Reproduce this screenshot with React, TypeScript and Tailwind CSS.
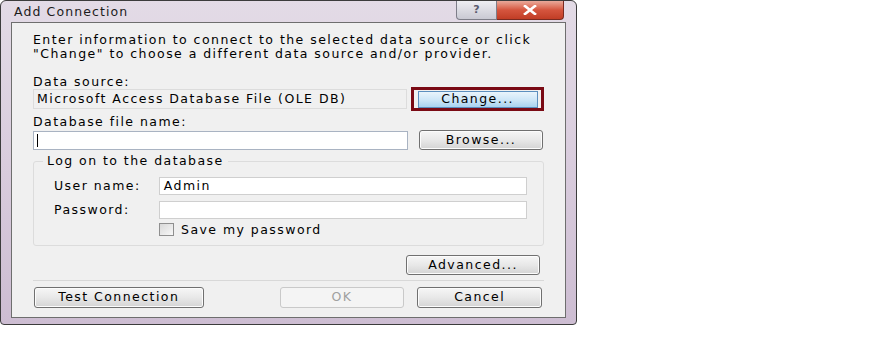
import React from "react";

const font = { fontFamily: '"DejaVu Sans", "Liberation Sans", sans-serif' };

const Btn: React.FC<{ label: string; className?: string; disabled?: boolean }> = ({ label, className = "", disabled }) => (
  <div
    className={`flex items-center justify-center rounded-[3px] border ${
      disabled
        ? "border-[#c9c9c9] bg-[#f4f4f4] text-[#a0a0a0]"
        : "border-[#707070] bg-gradient-to-b from-[#f6f6f6] via-[#e8e8e8] to-[#d4d4d4] text-black shadow-[inset_0_0_0_1px_#fcfcfc]"
    } ${className}`}
  >
    {label}
  </div>
);

export default function App() {
  return (
    <div className="h-[341px] w-[871px] bg-white text-[12.5px] tracking-[1.45px]" style={font}>
      <div className="flex h-[325px] w-[577px] flex-col rounded-t-[6px] rounded-b-[4px] border border-[#3c3c3c] bg-gradient-to-b from-[#e3dbe6] via-[#d9ccdd] to-[#cdbdd2] px-[10px] pb-[6px]">
        {/* Title bar */}
        <div className="flex h-[21px] items-start justify-between">
          <span className="pl-[3px] pt-[2px] text-[12.5px] tracking-[1.1px] text-[#1c1c1c]">Add Connection</span>
          <div className="mr-[2px] flex">
            <div className="flex h-[19px] w-[41px] items-center justify-center rounded-bl-[4px] border border-t-0 border-[#7d7d88] bg-gradient-to-b from-[#eeeef2] to-[#c9c9d3] text-[11px] font-bold tracking-normal text-[#5a5a6e]">
              ?
            </div>
            <div className="flex h-[19px] w-[67px] items-center justify-center rounded-br-[4px] border border-l-0 border-t-0 border-[#7a2a20] bg-gradient-to-b from-[#e9a99a] via-[#d5553e] to-[#c13d25]">
              <svg width="14" height="10" viewBox="0 0 14 10">
                <path d="M2 1 L12 9 M12 1 L2 9" stroke="#ffffff" strokeWidth="2.6" strokeLinecap="square" />
              </svg>
            </div>
          </div>
        </div>

        {/* Client area */}
        <div className="flex flex-1 flex-col border border-[#6e6e6e] bg-[#f0f0f0] pl-[21px] pr-[21px] pt-[10px] text-black">
          <p className="leading-[14px]">Enter information to connect to the selected data source or click</p>
          <p className="leading-[14px]">"Change" to choose a different data source and/or provider.</p>

          <div className="mt-[14px] leading-[13px]">Data source:</div>
          <div className="mt-[-1px] flex items-center">
            <div className="flex h-[20px] w-[375px] items-center border border-[#dcdcdc] bg-[#f0f0f0] pl-[3px]">
              Microsoft Access Database File (OLE DB)
            </div>
            <div className="ml-[4px] flex h-[24px] w-[133px] items-center justify-center border-[3px] border-[#7a0a14]">
              <div className="flex h-[17px] w-[120px] items-center justify-center border border-[#5c8fbf] bg-gradient-to-b from-[#e9f4fc] via-[#cfe7f8] to-[#a8d3f0]">
                Change...
              </div>
            </div>
          </div>

          <div className="mt-[4px] leading-[13px]">Database file name:</div>
          <div className="mt-[2px] flex items-center">
            <div className="flex h-[19px] w-[375px] items-center border border-[#a9b3c2] bg-white pl-[3px]">
              <div className="h-[13px] w-[1px] bg-black" />
            </div>
            <Btn label="Browse..." className="ml-[11px] h-[20px] w-[124px]" />
          </div>

          {/* Group box */}
          <div className="relative mt-[11px] h-[85px] w-[511px] rounded-[3px] border border-[#dcdcdc] pl-[20px] pr-[16px] pt-[15px]">
            <span className="absolute left-[9px] top-[-8px] bg-[#f0f0f0] px-[4px] leading-[14px]">Log on to the database</span>
            <div className="flex items-center">
              <span className="w-[105px]">User name:</span>
              <div className="flex h-[18px] w-[369px] items-center border border-[#cfcfcf] bg-white pl-[4px]">Admin</div>
            </div>
            <div className="mt-[5px] flex items-center">
              <span className="w-[105px]">Password:</span>
              <div className="h-[18px] w-[369px] border border-[#cfcfcf] bg-white" />
            </div>
            <div className="ml-[105px] mt-[3px] flex items-center leading-[14px]">
              <div className="h-[13px] w-[15px] border border-[#8f8f8f] bg-gradient-to-br from-[#d8d8d8] to-[#f8f8f8]" />
              <span className="ml-[7px]">Save my password</span>
            </div>
          </div>

          <div className="mt-[9px] flex w-[507px] justify-end">
            <Btn label="Advanced..." className="h-[20px] w-[134px]" />
          </div>

          <div className="mt-[5px] h-[1px] w-[511px] bg-[#d8d8d8]" />

          <div className="mt-[6px] flex w-[509px] items-center">
            <Btn label="Test Connection" className="ml-[1px] h-[21px] w-[170px]" />
            <Btn label="OK" disabled className="ml-[76px] h-[21px] w-[125px]" />
            <Btn label="Cancel" className="ml-[13px] h-[21px] w-[125px]" />
          </div>
        </div>
      </div>
    </div>
  );
}
